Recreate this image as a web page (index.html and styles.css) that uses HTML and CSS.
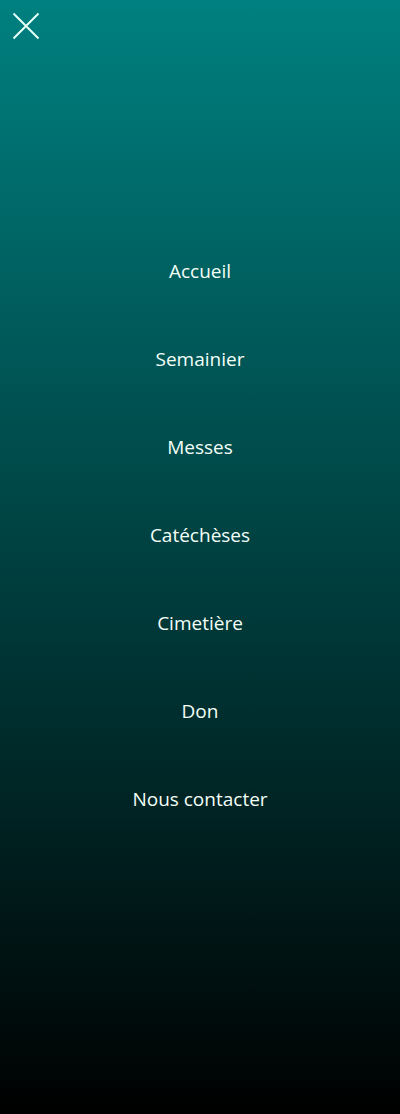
FILE: index.html
```html
<!DOCTYPE html>
<html lang="fr">
<head>
<meta charset="utf-8">
<title>Menu</title>
<link rel="stylesheet" href="styles.css">
</head>
<body>
<div class="menu">
  <button class="close" aria-label="Fermer">
    <svg width="28" height="28" viewBox="0 0 28 28"><path d="M1.5 1.5 L26.5 26.5 M26.5 1.5 L1.5 26.5" stroke="#e8fff8" stroke-width="2" fill="none"/></svg>
  </button>
  <nav class="nav">
    <a class="item" href="#">Accueil</a>
    <a class="item" href="#">Semainier</a>
    <a class="item" href="#">Messes</a>
    <a class="item" href="#">Catéchèses</a>
    <a class="item" href="#">Cimetière</a>
    <a class="item" href="#">Don</a>
    <a class="item" href="#">Nous contacter</a>
  </nav>
</div>
</body>
</html>
```
FILE: styles.css
```css
html, body {
  margin: 0;
  padding: 0;
}
body {
  width: 400px;
  height: 1114px;
  overflow: hidden;
  font-family: "Open Sans", "Noto Sans", sans-serif;
}
.menu {
  height: 1114px;
  background: linear-gradient(to bottom, #008080 0%, #000000 100%);
  display: flex;
  flex-direction: column;
}
.close {
  align-self: flex-start;
  background: none;
  border: 0;
  padding: 0;
  margin: 12px 0 0 12px;
  width: 28px;
  height: 28px;
  display: flex;
  cursor: pointer;
}
.nav {
  display: flex;
  flex-direction: column;
  align-items: center;
  margin-top: 187px;
}
.item {
  height: 88px;
  line-height: 88px;
  font-size: 19px;
  color: #f4fff8;
  text-decoration: none;
}
```
